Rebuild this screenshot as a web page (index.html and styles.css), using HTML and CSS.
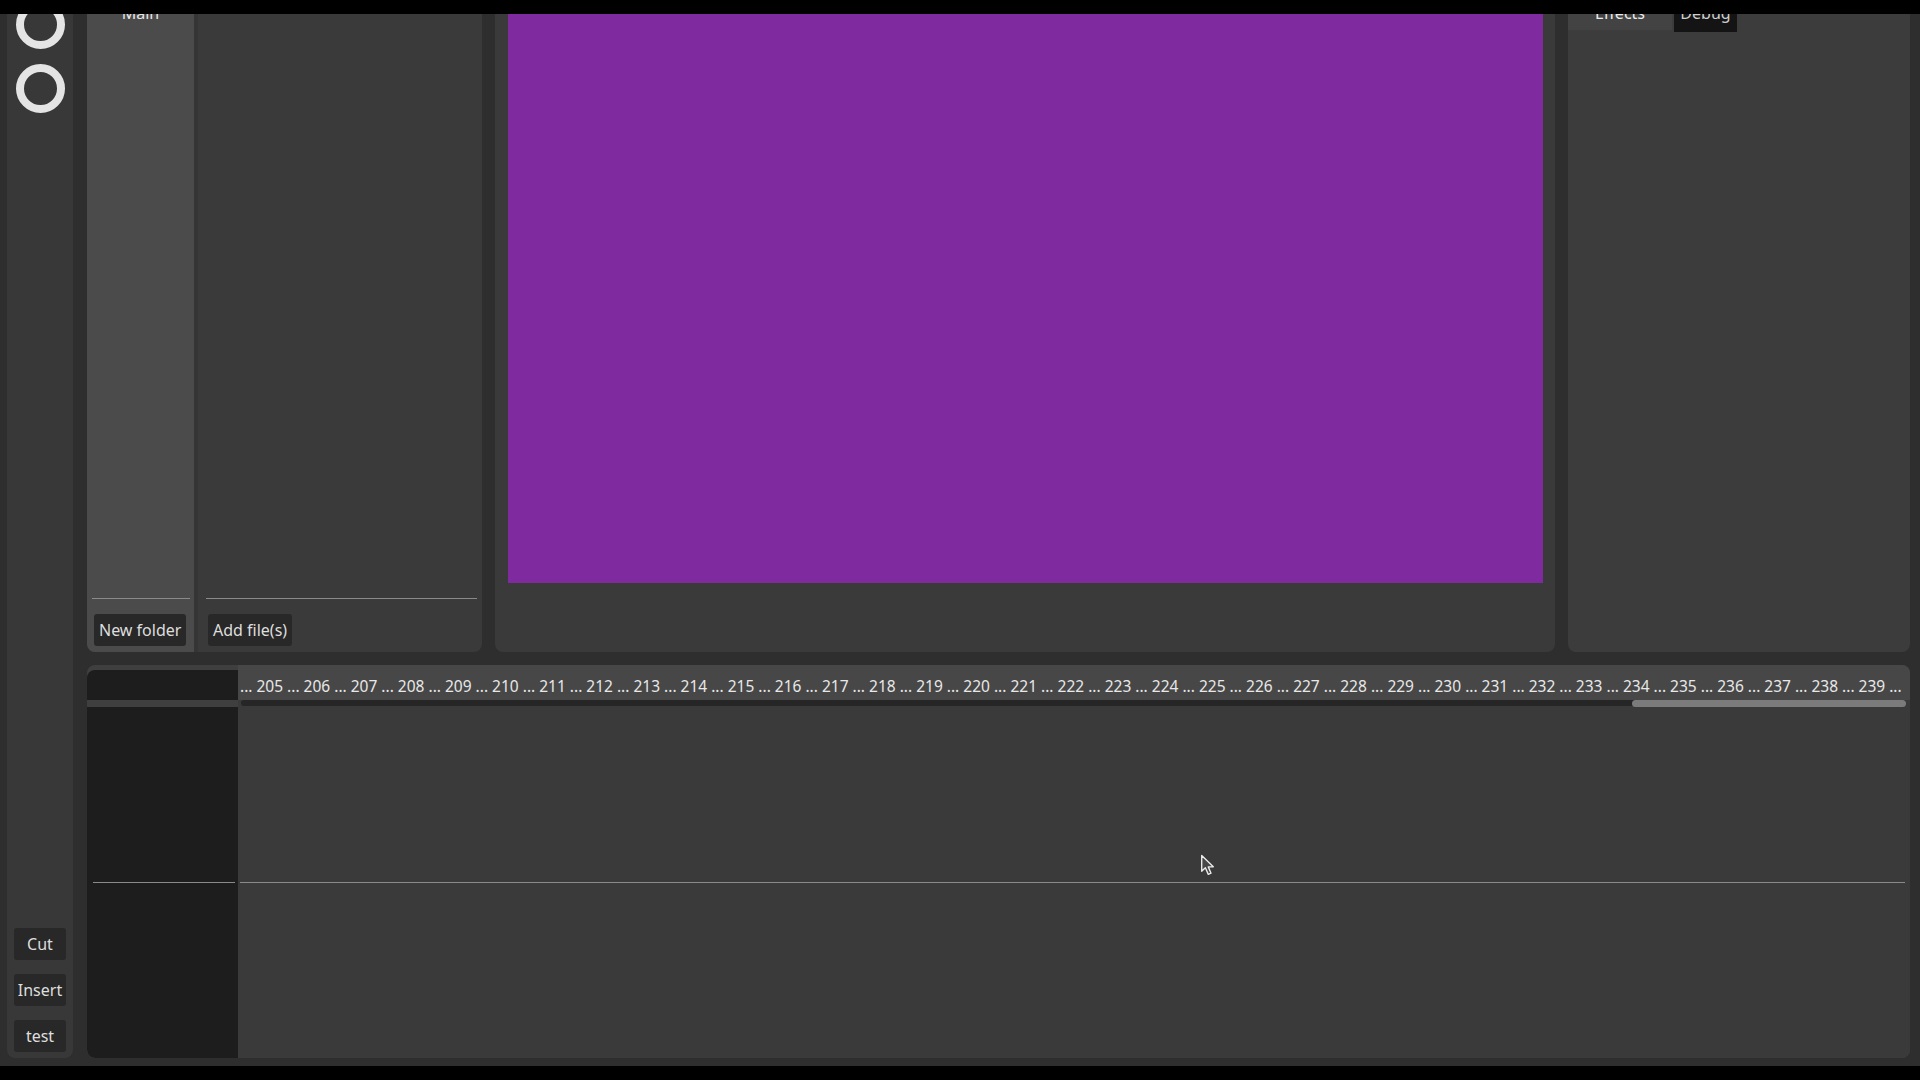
FILE: index.html
```html
<!DOCTYPE html>
<html lang="en">
<head>
<meta charset="utf-8">
<title>Editor</title>
<link rel="stylesheet" href="styles.css">
</head>
<body>
<div class="screen">
  <div class="bar"></div>
  <div class="stage">
    <div class="app">
      <aside class="toolbar">
        <div class="tools">
          <span class="ring"></span>
          <span class="ring"></span>
        </div>
        <div class="actions">
          <button class="btn side-btn">Cut</button>
          <button class="btn side-btn">Insert</button>
          <button class="btn side-btn">test</button>
        </div>
      </aside>
      <main class="workspace">
        <div class="top-row">
          <section class="panel media">
            <div class="folders">
              <div class="folder-label">Main</div>
              <div class="fill"></div>
              <div class="rule folder-rule"></div>
              <div class="btn-row folder-btns"><button class="btn">New folder</button></div>
            </div>
            <div class="splitter"></div>
            <div class="files">
              <div class="fill"></div>
              <div class="rule file-rule"></div>
              <div class="btn-row file-btns"><button class="btn">Add file(s)</button></div>
            </div>
          </section>
          <section class="panel preview">
            <div class="canvas"></div>
          </section>
          <section class="panel inspector">
            <div class="tabs">
              <div class="tab tab-active">Effects</div>
              <div class="tab tab-dark">Debug</div>
            </div>
          </section>
        </div>
        <section class="panel timeline">
          <div class="corner"></div>
          <div class="ruler">... 205 ... 206 ... 207 ... 208 ... 209 ... 210 ... 211 ... 212 ... 213 ... 214 ... 215 ... 216 ... 217 ... 218 ... 219 ... 220 ... 221 ... 222 ... 223 ... 224 ... 225 ... 226 ... 227 ... 228 ... 229 ... 230 ... 231 ... 232 ... 233 ... 234 ... 235 ... 236 ... 237 ... 238 ... 239 ...</div>
          <div class="corner-gap"></div>
          <div class="scrollbar"><div class="thumb"></div></div>
          <div class="track-heads">
            <div class="track-head"></div>
          </div>
          <div class="tracks">
            <div class="track"></div>
          </div>
        </section>
      </main>
    </div>
  </div>
  <div class="bar"></div>
  <svg class="cursor" width="17" height="23" viewBox="0 0 16 22" aria-hidden="true">
    <path d="M1.5 1.5 L1.5 16.5 L5 13.2 L7.8 19.5 L10.4 18.4 L7.8 12.3 L12.6 12.3 Z" fill="#474747" stroke="#ececec" stroke-width="1.3" stroke-linejoin="round"/>
  </svg>
</div>
</body>
</html>
```

FILE: styles.css
```css
* { box-sizing: border-box; }

html, body {
  margin: 0;
  padding: 0;
  background: #000;
}

body {
  font-family: "Noto Sans", "Open Sans", sans-serif;
  font-size: 16px;
  color: #e2e2e2;
}

.screen {
  position: relative;
  width: 1920px;
  height: 1080px;
  overflow: hidden;
}

.bar {
  height: 14px;
  background: #000;
}

.stage {
  height: 1052px;
  background: #2e2e2e;
  overflow: hidden;
}

.app {
  display: flex;
  height: 1068px;
  margin-top: -24px;
  padding: 0 10px 0 7px;
}

/* Left toolbar */
.toolbar {
  width: 66px;
  margin-right: 14px;
  background: #383838;
  border-radius: 0 0 8px 8px;
  display: flex;
  flex-direction: column;
  justify-content: space-between;
  align-items: center;
  padding: 10px 0 6px;
}

.tools {
  display: flex;
  flex-direction: column;
  gap: 15px;
}

.ring {
  display: block;
  width: 49px;
  height: 49px;
  border: 8px solid #e4e4e4;
  border-radius: 50%;
}

.actions {
  display: flex;
  flex-direction: column;
  gap: 14px;
}

.btn {
  font-family: "Noto Sans", "Open Sans", sans-serif;
  font-size: 16px;
  color: #dedede;
  background: #282828;
  border: none;
  border-radius: 3px;
  height: 32px;
  line-height: 33px;
  padding: 0 5px;
  margin: 0;
}

.side-btn {
  width: 52px;
  padding: 0;
  text-align: center;
}

/* Workspace */
.workspace {
  flex: 1;
  display: flex;
  flex-direction: column;
  gap: 13px;
}

.top-row {
  height: 662px;
  display: flex;
  gap: 13px;
}

.panel {
  background: #3a3a3a;
  border-radius: 8px;
}

/* Media panel */
.media {
  width: 395px;
  display: flex;
}

.folders {
  width: 107px;
  background: #4b4b4b;
  border-radius: 8px 0 0 8px;
  display: flex;
  flex-direction: column;
  padding: 12px 0 6px;
}

.folder-label {
  text-align: center;
  line-height: 22px;
  color: #e6e6e6;
}

.fill { flex: 1; }

.rule {
  height: 1px;
  background: #8a8a8a;
}

.folder-rule { margin: 0 4px 0 5px; }

.btn-row {
  display: flex;
  margin-top: 15px;
}

.folder-btns { padding-left: 7px; }

.splitter {
  width: 4px;
  background: #353535;
}

.files {
  flex: 1;
  display: flex;
  flex-direction: column;
  padding: 12px 0 6px;
}

.file-rule { margin: 0 5px 0 8px; }

.file-btns { padding-left: 10px; }

/* Preview */
.preview {
  width: 1060px;
  padding: 0 12px 0 13px;
}

.canvas {
  height: 593px;
  background: #7f2b9f;
}

/* Inspector */
.inspector {
  flex: 1;
  background: #3c3c3c;
}

.tabs {
  display: flex;
  align-items: flex-start;
  gap: 2px;
}

.tab {
  line-height: 22px;
  padding-top: 12px;
  text-align: center;
}

.tab-active {
  width: 104px;
  height: 40px;
  background: #434343;
  border-top-left-radius: 8px;
  color: #ececec;
}

.tab-dark {
  width: 63px;
  height: 42px;
  background: #141414;
  color: #cfcfcf;
}

/* Timeline */
.timeline {
  height: 393px;
  background: #3f3f3f;
  display: grid;
  grid-template-columns: 151px 1fr;
  grid-template-rows: 35px 7px 1fr;
  overflow: hidden;
}

.corner {
  margin-top: 5px;
  background: #1d1d1d;
  border-top-left-radius: 8px;
}

.ruler {
  background: #474747;
  font-size: 15.5px;
  line-height: 21px;
  padding: 11px 0 0 2px;
  white-space: nowrap;
  overflow: hidden;
  color: #e8e8e8;
}

.corner-gap {
  background: #3f3f3f;
}

.scrollbar {
  position: relative;
  background: #3a3a3a;
}

.scrollbar::before {
  content: "";
  position: absolute;
  left: 3px;
  right: 4px;
  top: 0;
  bottom: 1px;
  background: #262626;
  border-radius: 4px;
}

.thumb {
  position: absolute;
  left: 1394px;
  right: 4px;
  top: 0;
  bottom: 0;
  background: #7b7b7b;
  border-radius: 4px;
}

.track-heads {
  background: #1d1d1d;
  border-bottom-left-radius: 8px;
}

.track-head {
  height: 176px;
  border-bottom: 1px solid #8a8a8a;
  margin: 0 3px 0 6px;
}

.tracks {
  background: #3a3a3a;
}

.track {
  height: 176px;
  border-bottom: 1px solid #8a8a8a;
  margin: 0 5px 0 2px;
}

.cursor {
  position: absolute;
  left: 1200px;
  top: 854px;
}
```
